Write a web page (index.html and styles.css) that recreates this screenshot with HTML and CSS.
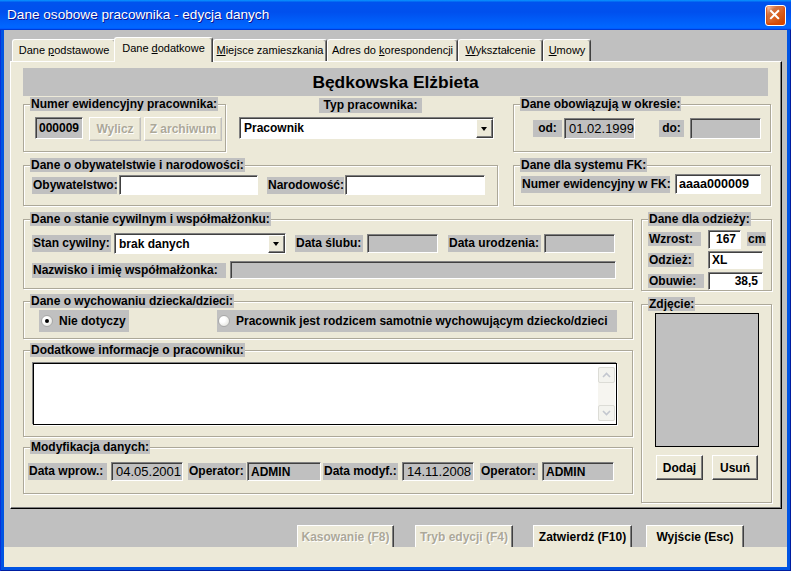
FILE: index.html
```html
<!DOCTYPE html>
<html lang="pl">
<head>
<meta charset="utf-8">
<title>Dane osobowe pracownika - edycja danych</title>
<link rel="stylesheet" href="styles.css">
</head>
<body>
<div class="window">
  <header class="titlebar">
    <span class="title">Dane osobowe pracownika - edycja danych</span>
    <span class="close"><svg viewBox="0 0 21 21" width="19" height="19"><path d="M5.5 5.5L13.5 13.5M13.5 5.5L5.5 13.5" stroke="#fff" stroke-width="2.2" stroke-linecap="square"/></svg></span>
  </header>
  <div class="frame">
    <div class="client">
      <nav class="tabs">
        <span class="tab t1"><span>Dane <u>p</u>odstawowe</span></span>
        <span class="tab t2 active"><span>Dane <u>d</u>odatkowe</span></span>
        <span class="tab t3"><span><u>M</u>iejsce zamieszkania</span></span>
        <span class="tab t4"><span>Adres do <u>k</u>orespondencji</span></span>
        <span class="tab t5"><span><u>W</u>ykształcenie</span></span>
        <span class="tab t6"><span><u>U</u>mowy</span></span>
      </nav>
      <main class="panel">
        <div class="header">Będkowska Elżbieta</div>

        <div class="row row-a">
          <fieldset class="group g-numer">
            <legend>Numer ewidencyjny pracownika:</legend>
            <div class="gbody">
              <div class="field ro f-num">000009</div>
              <span class="btn dis b-wylicz">Wylicz</span>
              <span class="btn dis b-arch">Z archiwum</span>
            </div>
          </fieldset>
          <div class="typ">
            <div class="lbl typ-lbl">Typ pracownika:</div>
            <div class="combo typ-combo"><span class="val">Pracownik</span><span class="arrow"></span></div>
          </div>
          <fieldset class="group g-okres">
            <legend>Dane obowiązują w okresie:</legend>
            <div class="gbody">
              <span class="lbl l-od">od:</span>
              <div class="field ro date f-od">01.02.1999</div>
              <span class="lbl l-do">do:</span>
              <div class="field ro date f-do"></div>
            </div>
          </fieldset>
        </div>

        <div class="row row-b">
          <fieldset class="group g-obyw">
            <legend>Dane o obywatelstwie i narodowości:</legend>
            <div class="gbody">
              <span class="lbl l-obyw">Obywatelstwo:</span>
              <div class="field f-obyw"></div>
              <span class="lbl l-narod">Narodowość:</span>
              <div class="field f-narod"></div>
            </div>
          </fieldset>
          <fieldset class="group g-fk">
            <legend>Dane dla systemu FK:</legend>
            <div class="gbody">
              <span class="lbl l-fk">Numer ewidencyjny w FK:</span>
              <div class="field f-fk">aaaa000009</div>
            </div>
          </fieldset>
        </div>

        <div class="row row-c">
          <div class="col-left">
            <fieldset class="group g-stan">
              <legend>Dane o stanie cywilnym i współmałżonku:</legend>
              <div class="gbody stan-r1">
                <span class="lbl l-stan">Stan cywilny:</span>
                <div class="combo stan-combo"><span class="val">brak danych</span><span class="arrow"></span></div>
                <span class="lbl l-slub">Data ślubu:</span>
                <div class="field ro f-slub"></div>
                <span class="lbl l-ur">Data urodzenia:</span>
                <div class="field ro f-ur"></div>
              </div>
              <div class="gbody stan-r2">
                <span class="lbl l-naz">Nazwisko i imię współmałżonka:</span>
                <div class="field ro f-naz"></div>
              </div>
            </fieldset>

            <fieldset class="group g-wych">
              <legend>Dane o wychowaniu dziecka/dzieci:</legend>
              <div class="gbody">
                <span class="radio r1"><span class="dot checked"></span>Nie dotyczy</span>
                <span class="radio r2"><span class="dot"></span>Pracownik jest rodzicem samotnie wychowującym dziecko/dzieci</span>
              </div>
            </fieldset>

            <fieldset class="group g-dod">
              <legend>Dodatkowe informacje o pracowniku:</legend>
              <div class="gbody">
                <div class="memo">
                  <div class="scroll">
                    <span class="sbtn"><svg width="9" height="6" viewBox="0 0 9 6"><path d="M1 5L4.5 1.5L8 5" fill="none" stroke="#c3c7cf" stroke-width="1.6"/></svg></span>
                    <span class="sbtn"><svg width="9" height="6" viewBox="0 0 9 6"><path d="M1 1L4.5 4.5L8 1" fill="none" stroke="#c3c7cf" stroke-width="1.6"/></svg></span>
                  </div>
                </div>
              </div>
            </fieldset>

            <fieldset class="group g-mod">
              <legend>Modyfikacja danych:</legend>
              <div class="gbody">
                <span class="lbl l-wprow">Data wprow.:</span>
                <div class="field ro date f-wprow">04.05.2001</div>
                <span class="lbl l-op1">Operator:</span>
                <div class="field ro f-op1">ADMIN</div>
                <span class="lbl l-modyf">Data modyf.:</span>
                <div class="field ro date f-modyf">14.11.2008</div>
                <span class="lbl l-op2">Operator:</span>
                <div class="field ro f-op2">ADMIN</div>
              </div>
            </fieldset>
          </div>

          <div class="col-right">
            <fieldset class="group g-odz">
              <legend>Dane dla odzieży:</legend>
              <div class="gbody odz-grid">
                <span class="lbl l-wz">Wzrost:</span>
                <div class="odz-val"><div class="field f-wz num">167</div><span class="lbl l-cm">cm</span></div>
                <span class="lbl l-odz">Odzież:</span>
                <div class="odz-val"><div class="field f-odz">XL</div></div>
                <span class="lbl l-ob">Obuwie:</span>
                <div class="odz-val"><div class="field f-odz num">38,5</div></div>
              </div>
            </fieldset>
            <fieldset class="group g-zdj">
              <legend>Zdjęcie:</legend>
              <div class="gbody">
                <div class="photo"></div>
                <div class="photo-btns">
                  <span class="btn b-dodaj">Dodaj</span>
                  <span class="btn b-usun">Usuń</span>
                </div>
              </div>
            </fieldset>
          </div>
        </div>
      </main>
      <div class="actions">
        <span class="abtn dis a1">Kasowanie (F8)</span>
        <span class="abtn dis a2">Tryb edycji (F4)</span>
        <span class="abtn a3">Zatwierdź (F10)</span>
        <span class="abtn a4">Wyjście (Esc)</span>
      </div>
      <div class="statusbar"></div>
    </div>
  </div>
</div>
</body>
</html>
```
FILE: styles.css
```css
* { box-sizing: border-box; }
html, body { margin: 0; padding: 0; }
body {
  width: 791px; height: 571px; overflow: hidden;
  background: #0054e3;
  font-family: "Liberation Sans", Arial, sans-serif;
  font-size: 12px; color: #000;
}
.window { width: 791px; height: 571px; display: flex; flex-direction: column; }

/* title bar */
.titlebar {
  flex: none; height: 30px;
  display: flex; align-items: center; justify-content: space-between;
  padding: 0 5px 0 7px;
  background: linear-gradient(180deg, #0997ff, #0053ee 8%, #0050ee 40%, #0066ff 88%, #0066ff 93%, #005bff 95%, #003dd7 96%, #003dd7);
}
.title { color: #fff; font-size: 13.6px; text-shadow: 1px 1px #0f1089; padding-bottom: 1px; }
.close {
  width: 21px; height: 21px; margin-top: 1px;
  display: flex; align-items: center; justify-content: center;
  border: 1px solid #fff; border-radius: 3px;
  background: radial-gradient(circle at 90% 90%, #cc4600 0, #dc6527 55%, #cd7546 70%, #ffccb2 90%, #fff 100%);
  box-shadow: inset 0 -1px 2px 1px #da4600;
}

.frame {
  flex: 1; display: flex; padding: 0 4px 4px;
  background: #0054e3;
  box-shadow: inset 1px 0 #0831d9, inset -1px 0 #001ea0, inset 0 -1px #001ea0;
}
.client { flex: 1; display: flex; flex-direction: column; background: #c0c0c0; }

/* tabs */
.tabs {
  flex: none; height: 24px; margin-top: 7px; padding-left: 8px;
  display: flex; align-items: flex-end;
}
.tab {
  height: 22px; display: flex; align-items: center; justify-content: center;
  background: #ece9d8; font-size: 11px; padding-bottom: 1px;
  border-top: 1px solid #fff; border-left: 1px solid #fff; border-right: 1px solid #404040;
  border-radius: 3px 3px 0 0;
  box-shadow: inset -1px 0 #808080;
  white-space: nowrap;
}
.tab.active {
  height: 25px; margin-bottom: -1px; margin-left: -2px;
  position: relative; z-index: 1; padding-bottom: 4px;
}
.t1 { width: 104px; }
.t2 { width: 99px; }
.t3 { width: 114px; }
.t4 { width: 131px; }
.t5 { width: 85px; }
.t6 { width: 48px; }

/* panel */
.panel {
  flex: none; width: 772px; height: 448px; margin-left: 6px;
  background: #ece9d8;
  border-top: 1px solid #fff; border-left: 1px solid #fff;
  border-right: 1px solid #000; border-bottom: 1px solid #000;
  box-shadow: inset -1px -1px #808080;
  padding: 6px 9px 0 12px;
}
.header {
  width: 745px; height: 28px; background: #c0c0c0;
  text-align: center; font-weight: bold; font-size: 17.4px; line-height: 28px;
}
.row { display: flex; align-items: flex-start; }
.row-a { margin-top: 1px; }
.row-b { margin-top: 6px; }
.row-c { margin-top: 6px; }

/* group boxes */
.group {
  margin: 0; padding: 0; min-inline-size: 0;
  border: 1px solid #aca899;
  box-shadow: inset 1px 1px #fff, 1px 1px #fff;
}
.group > legend {
  margin-left: 6px; padding: 0 1px;
  background: #c0c0c0; font-weight: bold; font-size: 12px; line-height: 14px;
}
.gbody { display: flex; align-items: center; }

.lbl {
  display: inline-block; background: #c0c0c0; font-weight: bold;
  padding: 0 1px; line-height: 17px; height: 17px; white-space: nowrap; flex: none;
}
.field {
  display: flex; align-items: center; padding-left: 3px; flex: none;
  background: #fff; font-weight: bold; white-space: nowrap;
  border: 1px solid; border-color: #808080 #fff #fff #808080;
  box-shadow: inset 1px 1px #404040;
}
.field.ro { background: #c0c0c0; }
.field.date { font-weight: normal; font-size: 13px; padding-left: 4px; }
.field.num { justify-content: flex-end; padding-right: 4px; }

.btn {
  display: flex; align-items: center; justify-content: center;
  background: #ece9d8; font-weight: bold;
  border: 1px solid; border-color: #fff #404040 #404040 #fff;
  box-shadow: inset -1px -1px #808080;
}
.btn.dis {
  color: #aca899; text-shadow: 1px 1px #fff;
  border-color: #fff #c0c0c0 #c0c0c0 #fff; box-shadow: inset -1px -1px #d8d4c4;
}

.combo {
  display: flex; align-items: stretch; background: #fff; flex: none;
  border: 1px solid; border-color: #808080 #fff #fff #808080;
  box-shadow: inset 1px 1px #404040;
}
.combo .val { flex: 1; display: flex; align-items: center; padding-left: 4px; font-weight: bold; }
.combo .arrow {
  width: 17px; margin: 1px 0 0 0; position: relative;
  background: #ece9d8;
  border: 1px solid; border-color: #fff #404040 #404040 #fff;
  box-shadow: inset -1px -1px #808080;
}
.combo .arrow::after {
  content: ""; position: absolute; left: 4px; top: 50%; margin-top: -2px;
  border-left: 3.5px solid transparent; border-right: 3.5px solid transparent; border-top: 4px solid #000;
}

/* row A */
.g-numer { width: 203px; height: 55px; }
.g-numer .gbody { margin-top: 6px; padding-left: 11px; align-items: flex-start; }
.f-num { width: 48px; height: 22px; padding-left: 3px; }
.b-wylicz { width: 52px; height: 24px; margin-left: 6px; }
.b-arch { width: 78px; height: 24px; margin-left: 3px; }

.typ { width: 256px; margin-left: 13px; padding-top: 1px; display: flex; flex-direction: column; }
.typ-lbl { align-self: flex-start; margin-left: 80px; width: 103px; text-align: center; height: 15px; line-height: 15px; }
.typ-combo { margin-top: 4px; width: 255px; height: 22px; }

.g-okres { width: 258px; height: 55px; margin-left: 18px; }
.g-okres .gbody { margin-top: 7px; padding-left: 19px; }
.l-od { width: 29px; text-align: center; }
.f-od { width: 71px; height: 21px; margin-left: 2px; }
.l-do { width: 25px; text-align: center; margin-left: 24px; }
.f-do { width: 71px; height: 21px; margin-left: 6px; }

/* row B */
.g-obyw { width: 475px; height: 48px; }
.g-obyw .gbody { margin-top: 3px; padding-left: 8px; }
.l-obyw { width: 85px; }
.f-obyw { width: 139px; height: 20px; margin-left: 2px; }
.l-narod { width: 77px; margin-left: 9px; }
.f-narod { width: 140px; height: 20px; margin-left: 1px; }

.g-fk { width: 258px; height: 48px; margin-left: 15px; }
.g-fk .gbody { margin-top: 2px; padding-left: 7px; }
.l-fk { width: 149px; }
.f-fk { width: 86px; height: 20px; margin-left: 5px; font-size: 12.6px; }

/* row C */
.col-left { width: 610px; display: flex; flex-direction: column; }
.col-right { width: 131px; margin-left: 8px; display: flex; flex-direction: column; }

.g-stan { height: 77px; }
.stan-r1 { margin-top: 7px; padding-left: 8px; height: 21px; }
.l-stan { width: 79px; }
.stan-combo { width: 172px; height: 21px; margin-left: 3px; }
.l-slub { margin-left: 9px; width: 68px; }
.f-slub { width: 71px; height: 19px; margin-left: 4px; }
.l-ur { margin-left: 10px; width: 93px; }
.f-ur { width: 71px; height: 19px; margin-left: 3px; }
.stan-r2 { margin-top: 7px; padding-left: 8px; }
.l-naz { width: 194px; height: 15px; line-height: 15px; }
.f-naz { width: 386px; height: 18px; margin-left: 4px; }

.g-wych { height: 45px; margin-top: 5px; }
.g-wych .gbody { margin-top: 2px; padding-left: 15px; }
.radio {
  height: 22px; display: flex; align-items: center;
  background: #c0c0c0; font-weight: bold; white-space: nowrap;
}
.r1 { width: 90px; padding-left: 2px; }
.r2 { width: 400px; margin-left: 88px; padding-left: 1px; }
.dot {
  width: 12px; height: 12px; border-radius: 50%; margin-right: 6px; flex: none;
  border: 1px solid #a8a8a8;
  background: radial-gradient(circle at 35% 35%, #fff 30%, #dcdcd5 100%);
  position: relative;
}
.dot.checked::after {
  content: ""; position: absolute; left: 3px; top: 3px; width: 4px; height: 4px;
  border-radius: 50%; background: #000;
}

.g-dod { height: 94px; margin-top: 4px; }
.g-dod .gbody { margin-top: 6px; padding-left: 9px; }
.memo {
  width: 584px; height: 62px; background: #fff;
  border: 1px solid #000;
  box-shadow: -1px -1px 0 #808080, 1px 1px 0 #fff;
  display: flex; justify-content: flex-end;
}
.scroll {
  width: 17px; margin: 3px 1px 3px 0; background: #f6f5f0;
  display: flex; flex-direction: column; justify-content: space-between;
}
.sbtn {
  height: 16px; display: flex; align-items: center; justify-content: center;
  background: #f3f3ee; border: 1px solid #dcdcd6; border-radius: 2px;
}

.g-mod { height: 54px; margin-top: 3px; }
.g-mod .gbody { margin-top: 8px; padding-left: 4px; }
.g-mod .field { height: 19px; }
.l-wprow { width: 79px; }
.f-wprow { width: 72px; margin-left: 4px; }
.l-op1 { width: 58px; margin-left: 5px; }
.f-op1 { width: 74px; margin-left: 1px; }
.l-modyf { width: 75px; margin-left: 2px; }
.f-modyf { width: 72px; margin-left: 4px; }
.l-op2 { width: 58px; margin-left: 6px; }
.f-op2 { width: 72px; margin-left: 4px; }

.g-odz { height: 79px; }
.odz-grid {
  display: grid; grid-template-columns: 60px 1fr; grid-auto-rows: 20px; row-gap: 1px;
  align-items: center; margin-top: 3px; padding-left: 6px;
}
.odz-grid .lbl { height: 14px; line-height: 14px; justify-self: start; }
.l-wz { width: 53px; }
.l-odz { width: 46px; }
.l-ob { width: 56px; }
.odz-val { display: flex; align-items: center; }
.f-wz { width: 33px; height: 19px; }
.l-cm { margin-left: 6px; width: 19px; text-align: center; }
.f-odz { width: 55px; height: 18px; }

.g-zdj { height: 206px; margin-top: 6px; }
.g-zdj .gbody { flex-direction: column; align-items: flex-start; margin-top: 2px; padding-left: 13px; }
.photo { width: 104px; height: 134px; background: #c0c0c0; border: 1px solid #000; }
.photo-btns { display: flex; margin-top: 8px; }
.b-dodaj { width: 47px; height: 25px; margin-left: 1px; }
.b-usun { width: 46px; height: 25px; margin-left: 9px; }

/* bottom */
.actions {
  flex: none; height: 38px; display: flex; align-items: flex-end; padding-left: 293px;
}
.abtn {
  height: 22px; display: flex; align-items: center; justify-content: center;
  background: #ece9d8; font-weight: bold; white-space: nowrap;
  border-top: 1px solid #fff; border-left: 1px solid #fff; border-right: 1px solid #404040;
  box-shadow: inset -1px 0 #808080;
}
.abtn.dis { color: #aca899; text-shadow: 1px 1px #fff; }
.a1 { width: 97px; }
.a2 { width: 98px; margin-left: 21px; }
.a3 { width: 99px; margin-left: 20px; }
.a4 { width: 98px; margin-left: 14px; }
.statusbar { flex: none; height: 20px; background: #ece9d8; }
```
